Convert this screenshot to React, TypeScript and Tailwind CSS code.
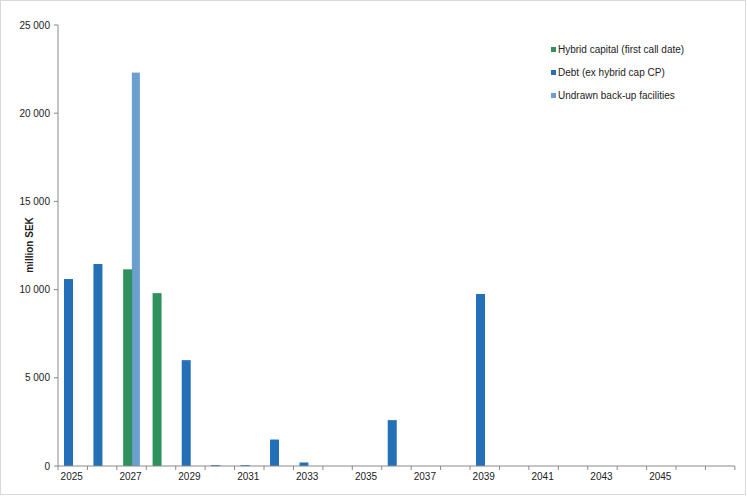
export default function App() {
  const x0 = 58, y0 = 466, yTop = 25;
  const n = 23;
  const cw = 29.43;
  const x1 = x0 + n * cw;
  const sy = (v: number) => y0 - (v / 25000) * (y0 - yTop);
  const debt: [number, number][] = [[0,10600],[1,11450],[4,6000],[5,50],[6,50],[7,1500],[8,200],[11,2600],[14,9750]];
  const hybrid: [number, number][] = [[2,11150],[3,9800]];
  const undrawn: [number, number][] = [[2,22300]];
  const bw = 9;
  return (
    <div className="w-[747px] h-[498px] bg-white relative" style={{ fontFamily: '"Liberation Sans", Arial, sans-serif' }}>
      <svg width="747" height="498" className="absolute inset-0">
        <rect x="0.5" y="0.5" width="745" height="494" fill="white" stroke="#d9d9d9" />
        {[0,5000,10000,15000,20000,25000].map(v => (
          <g key={v}>
            <line x1={x0-4} x2={x0} y1={sy(v)} y2={sy(v)} stroke="#888" />
            <text x={50} y={sy(v)+3.5} fontSize="10" textAnchor="end" fill="#222">{v===0?"0":`${v/1000} 000`}</text>
          </g>
        ))}
        <text transform="translate(33,245) rotate(-90)" fontSize="10" fontWeight="bold" textAnchor="middle" fill="#222">million SEK</text>
        {undrawn.map(([i,v]) => <rect key={"u"+i} x={x0+i*cw+15} y={sy(v)} width={bw-1} height={y0-sy(v)} fill="#6b9fd0" />)}
        {hybrid.map(([i,v]) => <rect key={"h"+i} x={x0+i*cw+6.3} y={sy(v)} width={bw} height={y0-sy(v)} fill="#30915d" />)}
        {debt.map(([i,v]) => <rect key={"d"+i} x={x0+i*cw+6} y={sy(v)} width={bw} height={Math.max(1,y0-sy(v))} fill="#2470b8" />)}
        <line x1={x0} x2={x0} y1={yTop} y2={y0} stroke="#888" />
        <line x1={x0} x2={x1} y1={y0} y2={y0} stroke="#888" />
        {Array.from({length: n+1}).map((_, i) => (
          <line key={i} x1={x0+i*cw} x2={x0+i*cw} y1={y0} y2={y0+4} stroke="#888" />
        ))}
        {Array.from({length: 11}).map((_, k) => (
          <text key={k} x={x0+(2*k)*cw+cw/2-1} y={480} fontSize="10" textAnchor="middle" fill="#222">{2025+2*k}</text>
        ))}
        {[["#30915d","Hybrid capital (first call date)"],["#2470b8","Debt (ex hybrid cap CP)"],["#6b9fd0","Undrawn back-up facilities"]].map(([c,t],k) => (
          <g key={k}>
            <rect x={551} y={47+k*23} width={5} height={5} fill={c} />
            <text x={558} y={53+k*23} fontSize="10" fill="#222">{t}</text>
          </g>
        ))}
      </svg>
    </div>
  );
}
